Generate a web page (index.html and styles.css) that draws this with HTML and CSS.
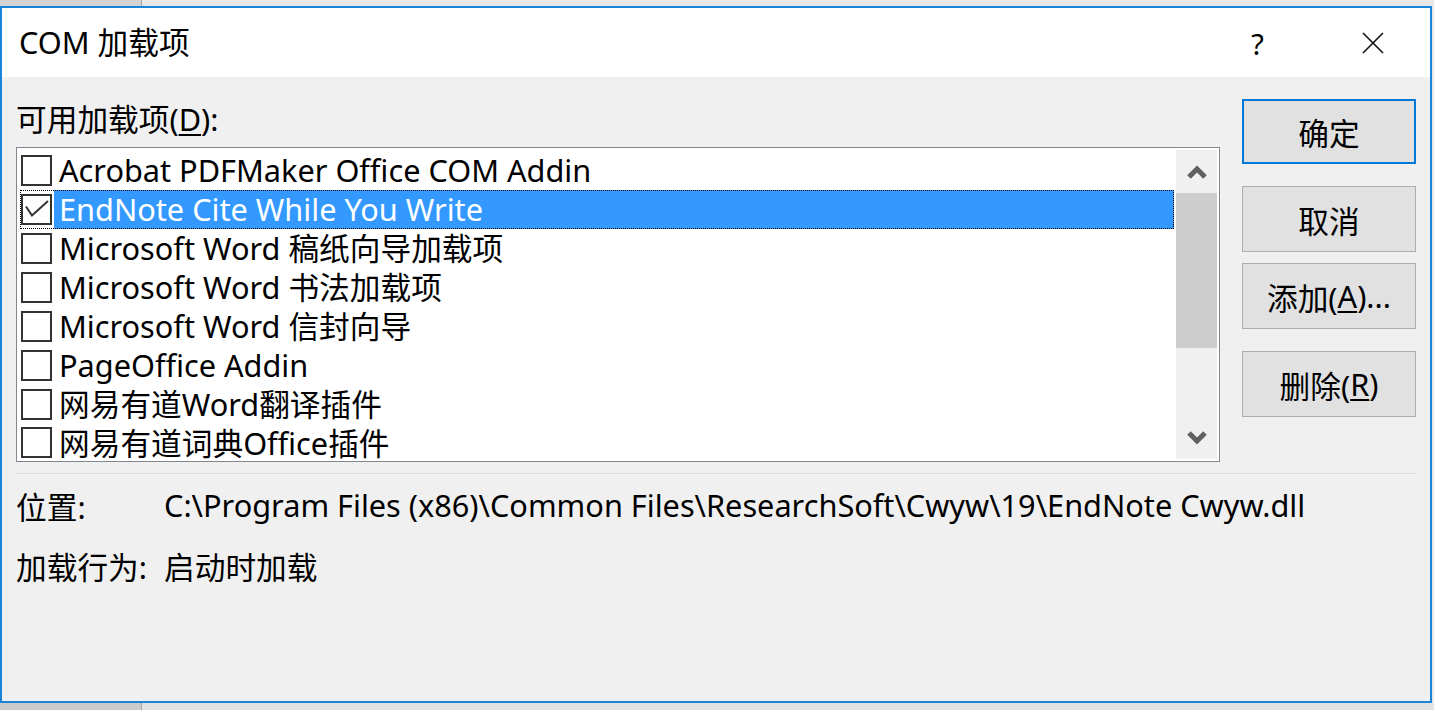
FILE: index.html
```html
<!DOCTYPE html>
<html lang="zh-CN">
<head>
<meta charset="utf-8">
<title>COM 加载项</title>
<link rel="stylesheet" href="styles.css">
</head>
<body>
<div class="screen">
  <div class="strip strip-top"><div class="strip-left"></div><div class="strip-right"></div></div>
  <div class="dialog">
    <div class="titlebar">
      <div class="title">COM 加载项</div>
      <div class="tbtn help">?</div>
      <div class="tbtn close">
        <svg width="22" height="22" viewBox="0 0 22 22"><path d="M1 1 L21 21 M21 1 L1 21" stroke="#111" stroke-width="1.6" fill="none"/></svg>
      </div>
    </div>
    <div class="content">
      <div class="main">
        <div class="left">
          <div class="label">可用加载项(<u>D</u>):</div>
          <div class="listbox">
            <div class="items">
              <div class="item"><span class="cb"></span><span class="text">Acrobat PDFMaker Office COM Addin</span></div>
              <div class="item selected"><span class="cb"><svg width="27" height="27" viewBox="0 0 27 27"><polyline points="3,10.5 9,19.5 25,5" stroke="#333" stroke-width="2" fill="none"/></svg></span><span class="text">EndNote Cite While You Write</span></div>
              <div class="item"><span class="cb"></span><span class="text">Microsoft Word 稿纸向导加载项</span></div>
              <div class="item"><span class="cb"></span><span class="text">Microsoft Word 书法加载项</span></div>
              <div class="item"><span class="cb"></span><span class="text">Microsoft Word 信封向导</span></div>
              <div class="item"><span class="cb"></span><span class="text">PageOffice Addin</span></div>
              <div class="item"><span class="cb"></span><span class="text">网易有道Word翻译插件</span></div>
              <div class="item last"><span class="cb"></span><span class="text">网易有道词典Office插件</span></div>
            </div>
            <div class="scrollbar">
              <div class="sbtn"><svg width="20" height="16" viewBox="0 0 20 16"><polyline points="2,13 10,5 18,13" stroke="#606060" stroke-width="5" fill="none" stroke-linejoin="miter"/></svg></div>
              <div class="thumb"></div>
              <div class="track"></div>
              <div class="sbtn"><svg width="20" height="16" viewBox="0 0 20 16"><polyline points="2,3 10,11 18,3" stroke="#606060" stroke-width="5" fill="none" stroke-linejoin="miter"/></svg></div>
            </div>
          </div>
        </div>
        <div class="buttons">
          <div class="btn default">确定</div>
          <div class="btn b-cancel">取消</div>
          <div class="btn b-add">添加(<u>A</u>)...</div>
          <div class="btn b-del">删除(<u>R</u>)</div>
        </div>
      </div>
      <div class="sep"></div>
      <div class="info">
        <div class="k">位置:</div>
        <div class="v">C:\Program Files (x86)\Common Files\ResearchSoft\Cwyw\19\EndNote Cwyw.dll</div>
        <div class="k">加载行为:</div>
        <div class="v">启动时加载</div>
      </div>
    </div>
  </div>
  <div class="strip strip-bottom"><div class="strip-left"></div><div class="strip-right"></div></div>
</div>
</body>
</html>
```

FILE: styles.css
```css
* { box-sizing: border-box; }
html, body { margin: 0; padding: 0; }
body {
  width: 1434px;
  height: 710px;
  overflow: hidden;
  background: #e8e8e8;
  font-family: "Noto Sans", "Noto Sans CJK SC", sans-serif;
  font-size: 30.7px;
  color: #000;
}
.screen {
  width: 1434px;
  height: 710px;
  display: flex;
  flex-direction: column;
}
.strip {
  display: flex;
  flex: none;
}
.strip-top { height: 6px; }
.strip-bottom { height: 7px; }
.strip-left {
  width: 142px;
  background: #d4d4d4;
  border-right: 1px solid #a8a8a8;
}
.strip-right {
  flex: 1;
  background: #e9e9e9;
}
.strip-bottom .strip-left { background: #cbcbcb; }
.strip-bottom .strip-right { background: #e2e2e2; }

.dialog {
  width: 1432px;
  height: 697px;
  flex: none;
  border: 2px solid #1a84d8;
  background: #f0f0f0;
  display: flex;
  flex-direction: column;
}
.titlebar {
  height: 69px;
  background: #fff;
  display: flex;
  align-items: center;
  flex: none;
}
.title {
  flex: 1;
  padding-left: 17px;
  line-height: 69px;
}
.tbtn {
  width: 115px;
  height: 69px;
  display: flex;
  align-items: center;
  justify-content: center;
}
.help { font-size: 29px; padding-top: 1px; }

.content {
  padding: 22px 14px 0 14px;
  flex: 1;
}
.main {
  display: flex;
  gap: 22px;
  align-items: flex-start;
}
.left {
  width: 1204px;
}
.label {
  line-height: 40px;
  height: 40px;
  margin-bottom: 8px;
  white-space: nowrap;
}
u { text-decoration-thickness: 1.5px; text-underline-offset: 3px; }

.listbox {
  height: 315px;
  border: 1px solid #828790;
  background: #fff;
  padding: 2px;
  display: flex;
}
.items {
  flex: 1;
  padding-top: 1px;
}
.item {
  height: 39px;
  margin: 0 2px 0 1px;
  display: flex;
  align-items: center;
  padding-left: 1px;
  white-space: nowrap;
}
.item.last { height: 35px; align-items: flex-start; padding-top: 3px; }
.item.last .text { height: 32px; line-height: 33px; overflow: visible; }
.cb {
  width: 31px;
  height: 31px;
  border: 2px solid #333;
  background: #fff;
  flex: none;
  display: flex;
}
.text {
  flex: 1;
  height: 39px;
  line-height: 39px;
  margin-left: 2px;
  padding-left: 5px;
}
.selected {
  outline: 1px dotted #000;
  outline-offset: -1px;
}
.selected .text {
  background: #3399ff;
  color: #fff;
}
.scrollbar {
  width: 41px;
  flex: none;
  background: #f0f0f0;
  display: flex;
  flex-direction: column;
}
.sbtn {
  height: 43px;
  display: flex;
  align-items: center;
  justify-content: center;
  flex: none;
}
.thumb {
  height: 155px;
  background: #cdcdcd;
  flex: none;
}
.track { flex: 1; }

.buttons {
  width: 174px;
  display: flex;
  flex-direction: column;
}
.btn {
  height: 66px;
  background: #e1e1e1;
  border: 1px solid #adadad;
  display: flex;
  align-items: center;
  justify-content: center;
  white-space: nowrap;
}
.btn.default {
  height: 65px;
  border: 2px solid #0078d7;
}
.b-cancel { margin-top: 22px; }
.b-add { margin-top: 11px; }
.b-del { margin-top: 22px; }

.sep {
  height: 1px;
  background: #dadada;
  margin-top: 11px;
}
.info {
  margin-top: 1px;
  display: grid;
  grid-template-columns: 148px 1fr;
  grid-auto-rows: 60px;
  align-items: center;
  white-space: nowrap;
}
```
